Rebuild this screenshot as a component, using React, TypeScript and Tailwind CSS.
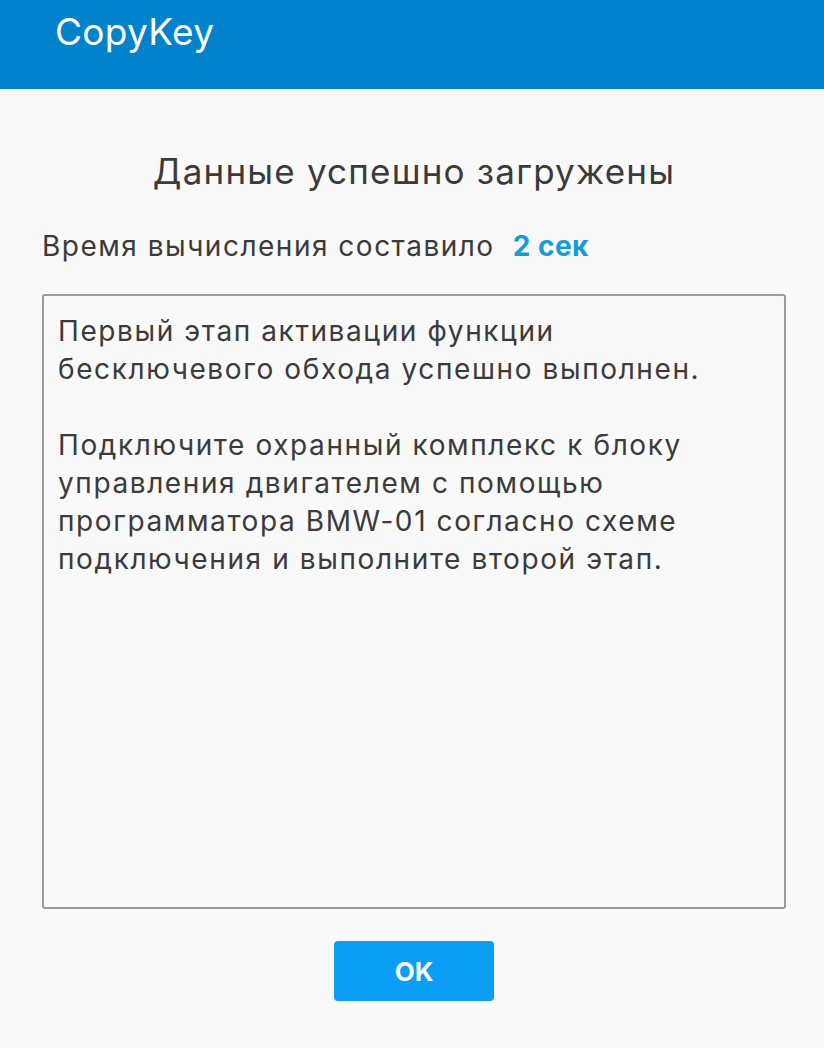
export default function App() {
  return (
    <div
      className="min-h-[1048px] bg-[#f9f9f9] text-[#3b3b3b]"
      style={{ fontFamily: "Inter, 'Noto Sans', sans-serif" }}
    >
      {/* header */}
      <header className="h-[89px] bg-[#0083cc] pl-[55px] pt-[8px]">
        <span className="text-[37px] leading-[47px] tracking-[0.3px] text-white">CopyKey</span>
      </header>

      <main className="ml-[42px] mr-[38px] pt-[60px]">
        <h1 className="text-center text-[35px] leading-[44px] tracking-[1.2px]">
          Данные успешно загружены
        </h1>

        <p className="mt-[36px] text-[28px] leading-[34px] tracking-[1.5px]">
          Время вычисления составило
          <span className="ml-[18px] font-bold tracking-[0.5px] text-[#179bd7]">2 сек</span>
        </p>

        {/* message box */}
        <div className="mt-[31px] h-[615px] rounded-[3px] border-2 border-[#9b9b9b] px-[14px] pt-[16px] text-[28px] leading-[38px] tracking-[1.6px]">
          <p>
            Первый этап активации функции
            <br />
            бесключевого обхода успешно выполнен.
          </p>
          <p className="mt-[38px]">
            Подключите охранный комплекс к блоку
            <br />
            управления двигателем с помощью
            <br />
            программатора BMW-01 согласно схеме
            <br />
            подключения и выполните второй этап.
          </p>
        </div>

        <div className="flex justify-center pt-[32px]">
          <button className="h-[60px] w-[160px] rounded-[4px] bg-[#0a9ff5] text-[26px] font-bold text-white">
            OK
          </button>
        </div>
      </main>
    </div>
  );
}
